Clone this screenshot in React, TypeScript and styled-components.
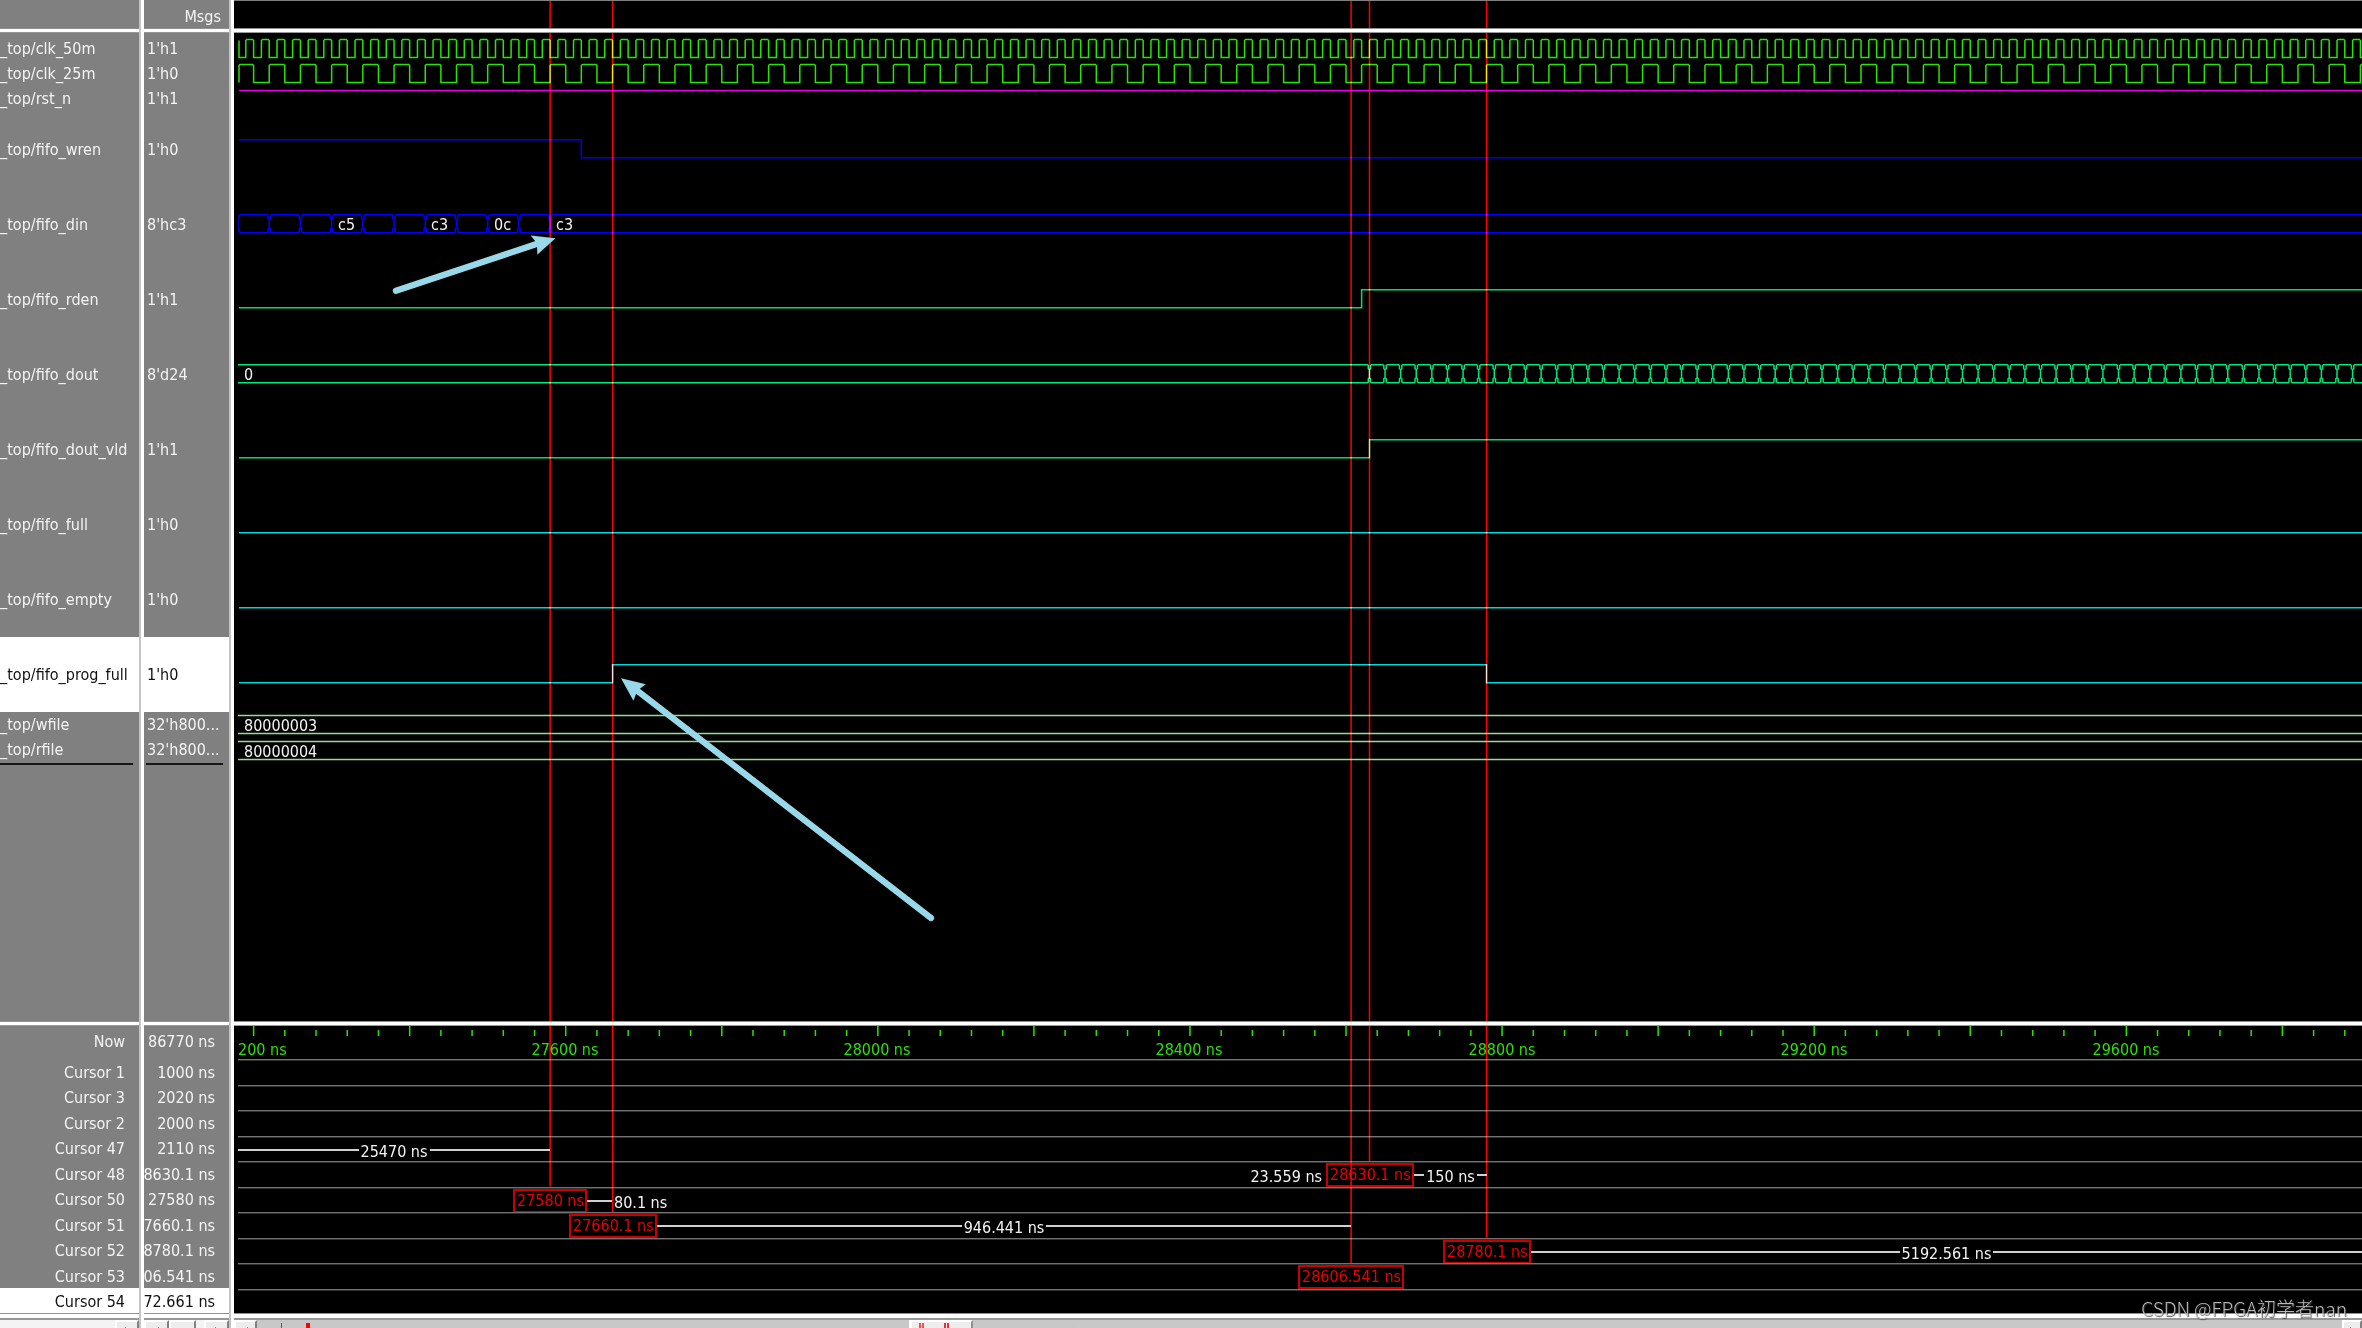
import React from "react";
import styled, { createGlobalStyle, css } from "styled-components";

/* ---------- time axis ---------- */

const PX_PER_NS = 0.7803;
const ORIGIN_NS = 27200;
const ORIGIN_X = 15.6;
const END_NS = 32000;

const xOf = (ns: number) => ORIGIN_X + (ns - ORIGIN_NS) * PX_PER_NS;

/* ---------- data ---------- */

type Wave =
  | { kind: "clock"; period: number; rise: number }
  | { kind: "level"; start: 0 | 1; edges: number[] }
  | { kind: "bus"; edges: number[]; labels: { at: number; text: string }[] };

type Signal = {
  name: string;
  value: string;
  color: string;
  wave: Wave;
  selected?: boolean;
};

const BUS_START = 27180;

const range = (from: number, to: number, step: number) => {
  const out: number[] = [];
  for (let t = from; t <= to; t += step) out.push(t);
  return out;
};

const clockSignals: Signal[] = [
  { name: "_top/clk_50m", value: "1'h1", color: "#28e400", wave: { kind: "clock", period: 20, rise: 27190 } },
  { name: "_top/clk_25m", value: "1'h0", color: "#28e400", wave: { kind: "clock", period: 40, rise: 27180 } },
  { name: "_top/rst_n", value: "1'h1", color: "#e000e0", wave: { kind: "level", start: 1, edges: [] } },
];

const fifoSignals: Signal[] = [
  { name: "_top/fifo_wren", value: "1'h0", color: "#0000f0", wave: { kind: "level", start: 1, edges: [27620] } },
  {
    name: "_top/fifo_din",
    value: "8'hc3",
    color: "#0000ff",
    wave: {
      kind: "bus",
      edges: range(27180, 27580, 40),
      labels: [
        { at: 27300, text: "c5" },
        { at: 27420, text: "c3" },
        { at: 27500, text: "0c" },
        { at: 27580, text: "c3" },
      ],
    },
  },
  { name: "_top/fifo_rden", value: "1'h1", color: "#00dc70", wave: { kind: "level", start: 0, edges: [28620] } },
  {
    name: "_top/fifo_dout",
    value: "8'd24",
    color: "#00e878",
    wave: { kind: "bus", edges: range(28630, END_NS, 20), labels: [{ at: BUS_START, text: "0" }] },
  },
  { name: "_top/fifo_dout_vld", value: "1'h1", color: "#00dc70", wave: { kind: "level", start: 0, edges: [28630.1] } },
  { name: "_top/fifo_full", value: "1'h0", color: "#00d8d8", wave: { kind: "level", start: 0, edges: [] } },
  { name: "_top/fifo_empty", value: "1'h0", color: "#00d8d8", wave: { kind: "level", start: 0, edges: [] } },
  {
    name: "_top/fifo_prog_full",
    value: "1'h0",
    color: "#00d8d8",
    wave: { kind: "level", start: 0, edges: [27660.1, 28780.1] },
    selected: true,
  },
];

const fileSignals: Signal[] = [
  {
    name: "_top/wfile",
    value: "32'h800...",
    color: "#94dc94",
    wave: { kind: "bus", edges: [], labels: [{ at: BUS_START, text: "80000003" }] },
  },
  {
    name: "_top/rfile",
    value: "32'h800...",
    color: "#94dc94",
    wave: { kind: "bus", edges: [], labels: [{ at: BUS_START, text: "80000004" }] },
  },
];

type Delta = { from: number; to?: number; text: string; mode?: "inside" | "after" | "before" };

type Cursor = {
  name: string;
  value: string;
  time?: number;
  tag?: string;
  tagWidth?: number;
  deltas?: Delta[];
  selected?: boolean;
};

const cursors: Cursor[] = [
  { name: "Cursor 1", value: "1000 ns" },
  { name: "Cursor 3", value: "2020 ns" },
  { name: "Cursor 2", value: "2000 ns" },
  {
    name: "Cursor 47",
    value: "2110 ns",
    deltas: [{ from: 0, to: xOf(27580), text: "25470 ns" }],
  },
  {
    name: "Cursor 48",
    value: "8630.1 ns",
    time: 28630.1,
    tag: "28630.1 ns",
    tagWidth: 88,
    deltas: [
      { from: xOf(28606.541) - 27, text: "23.559 ns", mode: "before" },
      { from: xOf(28630.1) + 44, to: xOf(28780.1), text: "150 ns" },
    ],
  },
  {
    name: "Cursor 50",
    value: "27580 ns",
    time: 27580,
    tag: "27580 ns",
    tagWidth: 74,
    deltas: [{ from: xOf(27580) + 37, to: xOf(27660.1), text: "80.1 ns", mode: "after" }],
  },
  {
    name: "Cursor 51",
    value: "7660.1 ns",
    time: 27660.1,
    tag: "27660.1 ns",
    tagWidth: 88,
    deltas: [{ from: xOf(27660.1) + 44, to: xOf(28606.541), text: "946.441 ns" }],
  },
  {
    name: "Cursor 52",
    value: "8780.1 ns",
    time: 28780.1,
    tag: "28780.1 ns",
    tagWidth: 88,
    deltas: [{ from: xOf(28780.1) + 44, text: "5192.561 ns" }],
  },
  { name: "Cursor 53", value: "06.541 ns", time: 28606.541, tag: "28606.541 ns", tagWidth: 106 },
  { name: "Cursor 54", value: "72.661 ns", selected: true },
];

/* ---------- styles ---------- */

const GlobalStyle = createGlobalStyle`
  html, body { margin: 0; background: #000; overflow: hidden; }
  *, *::before, *::after { box-sizing: border-box; }
`;

const Window = styled.main`
  display: grid;
  grid-template-columns: auto 5px auto 5px minmax(0, 1fr);
  height: 100vh;
  overflow: hidden;
  color: #f4f4f4;
  font: 16px/20px "DejaVu Sans Condensed", "DejaVu Sans", sans-serif;
  font-stretch: condensed;
  white-space: nowrap;
`;

const Sash = styled.div`
  border-left: 2px solid #c4c4c4;
  background: #fff;
`;

const Column = styled.section<{ $width?: number; $dark?: boolean }>`
  display: flex;
  flex-direction: column;
  width: ${(p) => (p.$width ? `${p.$width}px` : "auto")};
  min-width: 0;
  min-height: 0;
  background: ${(p) => (p.$dark ? "#000" : "#808080")};
`;

const Header = styled.header`
  position: relative;
  display: flex;
  flex: none;
  align-items: center;
  justify-content: flex-end;
  height: 28px;
  padding: 4px 8px 0 4px;
  border-top: 1px solid #808080;
`;

const Rule = styled.div<{ $thick?: boolean }>`
  flex: none;
  height: ${(p) => (p.$thick ? 7 : 5)}px;
  background: #fff;
  border-top: 1px solid #909090;
  border-bottom: ${(p) => (p.$thick ? 2 : 1)}px solid #989898;
`;

const Pane = styled.div<{ $inset?: boolean }>`
  position: relative;
  flex: 1;
  min-height: 0;
  padding: 3px 0 0 ${(p) => (p.$inset ? 4 : 0)}px;
  overflow: hidden;
`;

const RowGroup = styled.ul<{ $height?: number }>`
  display: flex;
  flex-direction: column;
  height: ${(p) => (p.$height ? `${p.$height}px` : "auto")};
  margin: 0;
  padding: 0;
  list-style: none;
`;

const selectedLook = css`
  background: #fff;
  color: #101010;
`;

const Row = styled.li<{ $tall?: boolean; $selected?: boolean; $pad?: number }>`
  display: flex;
  flex: ${(p) => (p.$tall ? "none" : 1)};
  align-items: center;
  height: ${(p) => (p.$tall ? "75px" : "auto")};
  padding-left: ${(p) => p.$pad ?? 0}px;
  ${(p) => p.$selected && selectedLook}
`;

const ListEnd = styled.hr<{ $indent?: number }>`
  height: 2px;
  margin: 0 6px 0 ${(p) => p.$indent ?? 0}px;
  border: 0;
  background: #181818;
`;

const WaveRow = styled.li<{ $tall?: boolean }>`
  display: flex;
  position: relative;
  flex: ${(p) => (p.$tall ? "none" : 1)};
  height: ${(p) => (p.$tall ? "75px" : "auto")};
  min-height: 0;
`;

const Drawing = styled.svg`
  display: block;
  width: 100%;
  height: 100%;
  fill: none;
  stroke-width: 1.5;
`;

const BusLabel = styled.span<{ $tall?: boolean }>`
  position: absolute;
  top: ${(p) => (p.$tall ? 28 : 4)}px;
`;

const Overlay = styled.svg<{ $blend?: boolean }>`
  position: absolute;
  inset: 0 0 0 4px;
  width: calc(100% - 4px);
  height: 100%;
  mix-blend-mode: ${(p) => (p.$blend ? "screen" : "normal")};
  pointer-events: none;
`;

const CursorPane = styled.div<{ $inset?: boolean }>`
  position: relative;
  flex: none;
  height: 287px;
  padding-left: ${(p) => (p.$inset ? 4 : 0)}px;
  overflow: hidden;
`;

const NowRow = styled.div<{ $pad: number }>`
  display: flex;
  align-items: center;
  justify-content: flex-end;
  height: 32px;
  padding-right: ${(p) => p.$pad}px;
`;

const CursorRow = styled.li<{ $pad: number; $selected?: boolean }>`
  display: flex;
  flex: 1;
  align-items: center;
  justify-content: flex-end;
  min-height: 0;
  padding: 4px ${(p) => p.$pad}px 0 0;
  ${(p) => p.$selected && selectedLook}
`;

const Axis = styled.div`
  position: relative;
  height: 33px;
  overflow: hidden;
  color: #2ae400;
`;

const AxisLabel = styled.span<{ $center?: boolean }>`
  position: absolute;
  top: 14px;
  transform: ${(p) => (p.$center ? "translateX(-50%)" : "none")};
`;

const Track = styled.li`
  position: relative;
  flex: 1;
  min-height: 0;
  border-top: 1px solid #727272;
  box-shadow: inset 0 1px #303030;
`;

const Tag = styled.span`
  position: absolute;
  top: 1px;
  height: 24px;
  padding-left: 2px;
  border: 2px solid #c80000;
  color: #e80000;
  transform: translateX(-50%);
`;

const DeltaBar = styled.span`
  position: absolute;
  top: 5px;
  display: flex;
  height: 20px;
`;

const DeltaText = styled.span`
  padding: 0 2px;
`;

const DeltaLine = styled.i`
  flex: 1;
  height: 2px;
  margin-top: 7px;
  background: #d0d0d0;
`;

const ScrollBar = styled.div<{ $trough: string }>`
  position: relative;
  display: flex;
  flex: none;
  height: 8px;
  background: ${(p) => p.$trough};
  overflow: hidden;
`;

const ScrollButton = styled.button<{ $width: number }>`
  flex: none;
  width: ${(p) => p.$width}px;
  height: 26px;
  padding: 0;
  border: 0;
  border-top: 2px solid #fff;
  border-left: 2px solid #fff;
  border-right: 2px solid #808080;
  background: #ededed;
`;

const Spacer = styled.div`
  flex: 1;
`;

const Thumb = styled.div`
  position: absolute;
  top: 0;
  width: 64px;
  height: 26px;
  border-top: 2px solid #fff;
  border-left: 3px solid #fff;
  border-right: 2px solid #909090;
  background: #ededed;
`;

const Mark = styled.i<{ $color: string; $width: number }>`
  position: absolute;
  top: 3px;
  bottom: 0;
  width: ${(p) => p.$width}px;
  background: ${(p) => p.$color};
`;

const Watermark = styled.div`
  position: absolute;
  right: 15px;
  bottom: 6px;
  color: rgba(205, 205, 205, 0.9);
  font: 300 19px/28px "Noto Sans CJK SC", sans-serif;
  text-shadow: 1px 1px 1px rgba(60, 60, 60, 0.9);
`;

/* ---------- wave drawing ---------- */

const clockPath = (period: number, rise: number, hi: number, lo: number) => {
  const half = period / 2;
  const startsWithRise = rise <= 27180;
  let d = startsWithRise ? `M1 ${lo}` : `M1 ${hi + 1}V${lo}`;
  for (let t = rise; t < END_NS; t += period) {
    const a = Math.max(1, xOf(t));
    const b = xOf(t + half);
    d += `H${a}V${hi + 1}L${a + 1} ${hi}H${b - 1}L${b} ${hi + 1}V${lo}`;
  }
  return d;
};

const levelPath = (start: 0 | 1, edges: number[], hi: number, lo: number) => {
  let level = start;
  let d = `M1 ${level ? hi : lo}`;
  edges.forEach((t) => {
    level = level ? 0 : 1;
    d += `H${xOf(t)}V${level ? hi : lo}`;
  });
  return d + `H${xOf(END_NS)}`;
};

const busPath = (edges: number[], hi: number, lo: number) => {
  const stops = edges.map(xOf);
  let d = "";
  let left = 0;
  [...stops, xOf(END_NS)].forEach((x) => {
    const right = x - 1.5;
    if (right > left) d += `M${left} ${hi}H${right}M${left} ${lo}H${right}`;
    left = x + 1.5;
  });
  stops.forEach((x) => {
    const a = x - 1.2;
    const b = x + 1.2;
    d += `M${a} ${hi}V${hi + 4}L${x} ${hi + 5}V${lo - 5}L${a} ${lo - 4}V${lo}`;
    d += `M${b} ${hi}V${hi + 4}L${x} ${hi + 5}M${x} ${lo - 5}L${b} ${lo - 4}V${lo}`;
  });
  return d;
};

function WaveTrack({ signal, tall }: { signal: Signal; tall?: boolean }) {
  const hi = tall ? 27.75 : 3.5;
  const lo = hi + 18;
  const { wave } = signal;
  const d =
    wave.kind === "clock"
      ? clockPath(wave.period, wave.rise, hi, lo)
      : wave.kind === "level"
        ? levelPath(wave.start, wave.edges, hi, lo)
        : busPath(wave.edges, hi, lo);
  return (
    <WaveRow $tall={tall}>
      <Drawing stroke={signal.color} aria-hidden="true">
        <path d={d} />
      </Drawing>
      {wave.kind === "bus" &&
        wave.labels.map((l) => (
          <BusLabel key={l.at} $tall={tall} style={{ left: Math.round(xOf(l.at)) + 6 }}>
            {l.text}
          </BusLabel>
        ))}
    </WaveRow>
  );
}

const timed = cursors.map((c, row) => ({ ...c, row })).filter((c) => c.time !== undefined);

function CursorLines({ untilRow }: { untilRow?: boolean }) {
  return (
    <Overlay $blend aria-hidden="true">
      {timed.map((c) => (
        <line
          key={c.name}
          x1={xOf(c.time as number)}
          x2={xOf(c.time as number)}
          y1={0}
          y2={untilRow ? 33 + c.row * 25.5 : 1200}
          stroke="#ff0000"
          strokeWidth={1.5}
        />
      ))}
    </Overlay>
  );
}

function Names({ signals, field, tall }: { signals: Signal[]; field: "name" | "value"; tall?: boolean }) {
  return (
    <>
      {signals.map((s) => (
        <Row key={s.name} $tall={tall} $selected={s.selected} $pad={field === "value" ? 3 : 0}>
          {s[field]}
        </Row>
      ))}
    </>
  );
}

function ListColumn({ field }: { field: "name" | "value" }) {
  const isName = field === "name";
  const pad = 14;
  return (
    <Column $width={isName ? 139 : 85}>
      <Header>{isName ? "" : "Msgs"}</Header>
      <Rule />
      <Pane>
        <RowGroup $height={76}>
          <Names signals={clockSignals} field={field} />
        </RowGroup>
        <RowGroup>
          <Names signals={fifoSignals} field={field} tall />
        </RowGroup>
        <RowGroup $height={51}>
          <Names signals={fileSignals} field={field} />
        </RowGroup>
        <ListEnd $indent={isName ? 0 : 2} />
      </Pane>
      <Rule />
      <CursorPane>
        <NowRow $pad={pad}>{isName ? "Now" : "86770 ns"}</NowRow>
        <RowGroup $height={255}>
          {cursors.map((c) => (
            <CursorRow key={c.name} $pad={pad} $selected={c.selected}>
              {c[field]}
            </CursorRow>
          ))}
        </RowGroup>
      </CursorPane>
      <Rule $thick />
      {isName ? (
        <ScrollBar $trough="#f4f4f4">
          <Spacer />
          <ScrollButton $width={24} aria-label="Scroll names right">
            <Chevron dir="right" />
          </ScrollButton>
        </ScrollBar>
      ) : (
        <ScrollBar $trough="#f4f4f4">
          <ScrollButton $width={25} aria-label="Scroll values left">
            <Chevron dir="left" />
          </ScrollButton>
          <ScrollButton $width={27} aria-label="Values scroll thumb" />
          <Spacer />
          <ScrollButton $width={25} aria-label="Scroll values right">
            <Chevron dir="right" />
          </ScrollButton>
        </ScrollBar>
      )}
    </Column>
  );
}

function Chevron({ dir }: { dir: "left" | "right" }) {
  return (
    <svg width="10" height="14" viewBox="0 0 10 14" aria-hidden="true">
      <path d={dir === "left" ? "M7 1V13L1 7z" : "M3 1V13L9 7z"} fill="#202020" />
    </svg>
  );
}

function TimeAxis() {
  return (
    <Axis>
      <Drawing stroke="#2ae400" aria-hidden="true">
        {range(ORIGIN_NS, END_NS, 40).map((t) => {
          const major = (t - ORIGIN_NS) % 200 === 0;
          return <line key={t} x1={xOf(t)} x2={xOf(t)} y1={major ? 0 : 4} y2={10} />;
        })}
      </Drawing>
      <AxisLabel style={{ left: 0 }}>200 ns</AxisLabel>
      {[27600, 28000, 28400, 28800, 29200, 29600].map((t) => (
        <AxisLabel key={t} $center style={{ left: Math.floor(xOf(t)) }}>
          {t} ns
        </AxisLabel>
      ))}
    </Axis>
  );
}

function DeltaSpan({ delta }: { delta: Delta }) {
  const from = Math.round(delta.from);
  if (delta.mode === "before") {
    return (
      <DeltaBar style={{ right: `calc(100% - ${from}px)` }}>
        <DeltaText>{delta.text}</DeltaText>
      </DeltaBar>
    );
  }
  if (delta.mode === "after") {
    const to = Math.floor(delta.to as number);
    return (
      <>
        <DeltaBar style={{ left: from, width: to - from }}>
          <DeltaLine />
        </DeltaBar>
        <DeltaBar style={{ left: to }}>
          <DeltaText>{delta.text}</DeltaText>
        </DeltaBar>
      </>
    );
  }
  const extent = delta.to === undefined ? { right: 0 } : { width: Math.round(delta.to) - from };
  return (
    <DeltaBar style={{ left: from, ...extent }}>
      <DeltaLine />
      <DeltaText>{delta.text}</DeltaText>
      <DeltaLine />
    </DeltaBar>
  );
}

function Annotations() {
  return (
    <Overlay aria-hidden="true">
      <g transform="translate(-238 -33)" fill="#98d8e9" stroke="none">
        <path d="M396 290.7L538 243.6" stroke="#98d8e9" strokeWidth="6.3" strokeLinecap="round" />
        <path d="M555.5 238.3L530.7 235.5L537 243.5L537.3 254.8z" />
        <path d="M931 918L637 690.5" stroke="#98d8e9" strokeWidth="6.3" strokeLinecap="round" />
        <path d="M621 678.2L645.8 684.3L637.5 690.5L633.4 700.8z" />
      </g>
    </Overlay>
  );
}

function WaveColumn() {
  return (
    <Column $dark>
      <Header>
        <CursorLines />
      </Header>
      <Rule />
      <Pane $inset>
        <RowGroup $height={76}>
          {clockSignals.map((s) => (
            <WaveTrack key={s.name} signal={s} />
          ))}
        </RowGroup>
        <RowGroup>
          {fifoSignals.map((s) => (
            <WaveTrack key={s.name} signal={s} tall />
          ))}
        </RowGroup>
        <RowGroup $height={51}>
          {fileSignals.map((s) => (
            <WaveTrack key={s.name} signal={s} />
          ))}
        </RowGroup>
        <CursorLines />
        <Annotations />
      </Pane>
      <Rule />
      <CursorPane $inset>
        <TimeAxis />
        <RowGroup $height={255}>
          {cursors.map((c) => (
            <Track key={c.name}>
              {c.tag && (
                <Tag style={{ left: Math.round(xOf(c.time as number)), width: c.tagWidth }}>{c.tag}</Tag>
              )}
              {c.deltas?.map((d) => (
                <DeltaSpan key={d.text} delta={d} />
              ))}
            </Track>
          ))}
        </RowGroup>
        <CursorLines untilRow />
      </CursorPane>
      <Rule $thick />
      <ScrollBar $trough="#c8c8c8">
        <ScrollButton $width={23} aria-label="Scroll waves left">
          <Chevron dir="left" />
        </ScrollButton>
        <Spacer />
        <ScrollButton $width={20} aria-label="Scroll waves right">
          <Chevron dir="right" />
        </ScrollButton>
        <Thumb style={{ left: 675 }} />
        <Mark $color="#f01818" $width={1} style={{ left: 47 }} />
        <Mark $color="#ff0000" $width={4} style={{ left: 72 }} />
        <Mark $color="#f05050" $width={2} style={{ left: 685 }} />
        <Mark $color="#f05050" $width={2} style={{ left: 688 }} />
        <Mark $color="#e83030" $width={2} style={{ left: 710 }} />
        <Mark $color="#e83030" $width={2} style={{ left: 713 }} />
        <Mark $color="#f0d020" $width={1} style={{ left: 839 }} />
      </ScrollBar>
    </Column>
  );
}

export default function App() {
  return (
    <>
      <GlobalStyle />
      <Window>
        <ListColumn field="name" />
        <Sash />
        <ListColumn field="value" />
        <Sash />
        <WaveColumn />
      </Window>
      <Watermark>CSDN @FPGA初学者nan</Watermark>
    </>
  );
}
